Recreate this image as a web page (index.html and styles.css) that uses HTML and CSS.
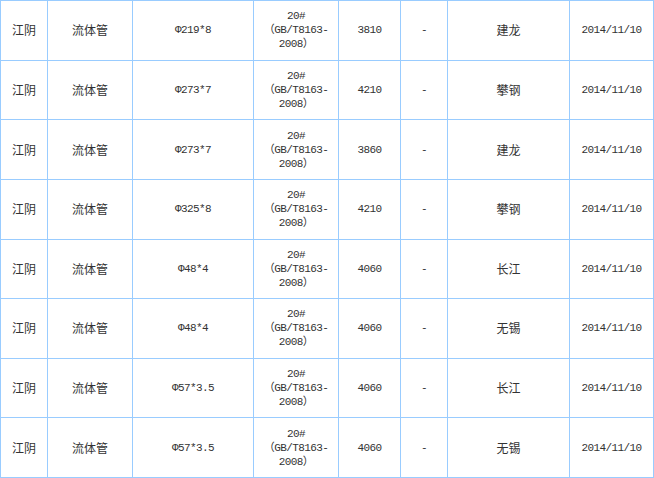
FILE: index.html
```html
<!DOCTYPE html>
<html lang="zh-CN">
<head>
<meta charset="utf-8">
<title>流体管价格</title>
<link rel="stylesheet" href="styles.css">
</head>
<body>
<table class="price-table">
  <colgroup>
    <col class="c-city">
    <col class="c-name">
    <col class="c-spec">
    <col class="c-mat">
    <col class="c-price">
    <col class="c-chg">
    <col class="c-mill">
    <col class="c-date">
  </colgroup>
  <tbody>
    <tr><td class="cn">江阴</td><td class="cn">流体管</td><td class="num">Φ219*8</td><td class="num mat">20#<br>（GB/T8163-<br>2008）</td><td class="num">3810</td><td class="num">-</td><td class="cn">建龙</td><td class="num">2014/11/10</td></tr>
    <tr><td class="cn">江阴</td><td class="cn">流体管</td><td class="num">Φ273*7</td><td class="num mat">20#<br>（GB/T8163-<br>2008）</td><td class="num">4210</td><td class="num">-</td><td class="cn">攀钢</td><td class="num">2014/11/10</td></tr>
    <tr><td class="cn">江阴</td><td class="cn">流体管</td><td class="num">Φ273*7</td><td class="num mat">20#<br>（GB/T8163-<br>2008）</td><td class="num">3860</td><td class="num">-</td><td class="cn">建龙</td><td class="num">2014/11/10</td></tr>
    <tr><td class="cn">江阴</td><td class="cn">流体管</td><td class="num">Φ325*8</td><td class="num mat">20#<br>（GB/T8163-<br>2008）</td><td class="num">4210</td><td class="num">-</td><td class="cn">攀钢</td><td class="num">2014/11/10</td></tr>
    <tr><td class="cn">江阴</td><td class="cn">流体管</td><td class="num">Φ48*4</td><td class="num mat">20#<br>（GB/T8163-<br>2008）</td><td class="num">4060</td><td class="num">-</td><td class="cn">长江</td><td class="num">2014/11/10</td></tr>
    <tr><td class="cn">江阴</td><td class="cn">流体管</td><td class="num">Φ48*4</td><td class="num mat">20#<br>（GB/T8163-<br>2008）</td><td class="num">4060</td><td class="num">-</td><td class="cn">无锡</td><td class="num">2014/11/10</td></tr>
    <tr><td class="cn">江阴</td><td class="cn">流体管</td><td class="num">Φ57*3.5</td><td class="num mat">20#<br>（GB/T8163-<br>2008）</td><td class="num">4060</td><td class="num">-</td><td class="cn">长江</td><td class="num">2014/11/10</td></tr>
    <tr><td class="cn">江阴</td><td class="cn">流体管</td><td class="num">Φ57*3.5</td><td class="num mat">20#<br>（GB/T8163-<br>2008）</td><td class="num">4060</td><td class="num">-</td><td class="cn">无锡</td><td class="num">2014/11/10</td></tr>
  </tbody>
</table>
</body>
</html>
```
FILE: styles.css
```css
html, body {
  margin: 0;
  padding: 0;
  background: #ffffff;
}

.price-table {
  border-collapse: collapse;
  table-layout: fixed;
  width: 654px;
  height: 478px;
  border: 1px solid #99ccff;
  color: #333333;
}

.c-city { width: 47px; }
.c-name { width: 85px; }
.c-spec { width: 121px; }
.c-mat { width: 85px; }
.c-price { width: 62px; }
.c-chg { width: 47px; }
.c-mill { width: 122px; }
.c-date { width: 84px; }

.price-table tr {
  height: 59.5px;
}

.price-table td {
  border: 1px solid #99ccff;
  padding: 0;
  text-align: center;
  vertical-align: middle;
}

.cn {
  font-family: "Noto Sans CJK SC", sans-serif;
  font-size: 12px;
  line-height: 14px;
}

.num {
  font-family: "Liberation Mono", "Noto Sans CJK SC", monospace;
  font-size: 11px;
  letter-spacing: -0.6px;
  line-height: 14px;
}

.mat {
  line-height: 14px;
  text-spacing-trim: space-all;
}
```
